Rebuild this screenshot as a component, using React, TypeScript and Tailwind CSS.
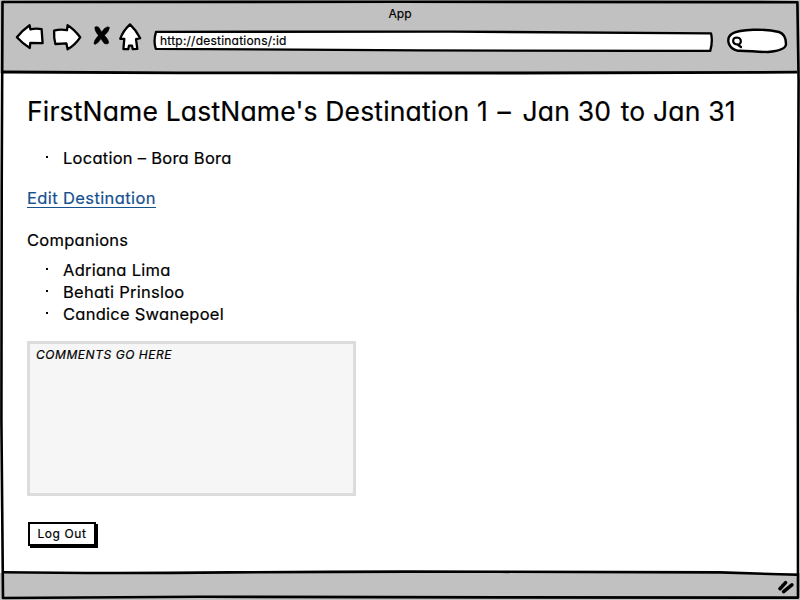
import type { ReactNode } from "react";

const companions = ["Adriana Lima", "Behati Prinsloo", "Candice Swanepoel"];

function BackIcon() {
  return (
    <svg className="h-[28px] w-[30px]" viewBox="15 23 30 28" fill="white" stroke="black" strokeWidth="2.3" strokeLinejoin="round">
      <path d="M16.9 37.3 Q22 30.5 29.6 25.2 L30.4 29.4 Q36 28 41.6 29.2 L42.6 43.2 L30.3 42.8 L29.8 48 Q23 44 16.9 37.3Z" />
    </svg>
  );
}

function ForwardIcon() {
  return (
    <svg className="h-[28px] w-[31px]" viewBox="52 23 31 28" fill="white" stroke="black" strokeWidth="2.3" strokeLinejoin="round">
      <path d="M54.1 30.6 Q60 29 67 30.2 L67.6 25.2 Q74 29 80.2 37.3 Q75 45 67.6 49.3 L66.4 43.4 L55.4 44 Q53.8 38 54.1 30.6Z" />
    </svg>
  );
}

function StopIcon() {
  return (
    <svg className="h-[22px] w-[18px]" viewBox="93 25 18 22" fill="black" stroke="black" strokeWidth="0.5" strokeLinejoin="round">
      <path d="M94.8 27.2 Q96.5 25.6 98.7 27.2 L101.7 32 Q104 27.8 107.5 26.7 L109.5 27.4 Q109.3 31 104.5 35.5 Q108.5 39 108.8 43 Q107 44.8 104.3 43.6 L100.8 38.8 Q99 42.8 95.2 44.5 L93.9 43.6 Q93.8 40.5 98.4 35.5 Q94.5 31 94.8 27.2Z" />
    </svg>
  );
}

function HomeIcon() {
  return (
    <svg className="h-[30px] w-[25px]" viewBox="118 22 25 30" fill="white" stroke="black" strokeWidth="2.3" strokeLinejoin="round">
      <path d="M130 24.4 Q136 30 140.2 38.2 L136 39.2 L137.3 48.8 L132.8 49.2 L132 45.7 L129 45.7 L128.2 49.2 L123.4 49 L124.3 38.8 L120.2 38.8 Q123 31 130 24.4Z" />
    </svg>
  );
}

function AddressBar() {
  return (
    <div className="relative flex h-[22px] w-[560px] items-center pl-[7px]">
      <svg className="absolute inset-0 h-[22px] w-[560px]" viewBox="153 30 560 22" fill="white" stroke="black" strokeWidth="2.3" strokeLinejoin="round">
        <path d="M156 31.8 L450 31.6 L711 33.4 Q713 41 710.2 51 L420 50.4 L155.8 48.8 Q153.2 41 156 31.8Z" />
      </svg>
      <span className="relative text-[12px] leading-4 tracking-[0.22px]">http://destinations/:id</span>
    </div>
  );
}

function SearchField() {
  return (
    <svg className="h-[27px] w-[62px]" viewBox="727 28 62 27" fill="white" stroke="black" strokeWidth="2.4" strokeLinecap="round">
      <path d="M738 50.8 C727 48 726 38 732 33.8 C740 29 765 28.5 779 32 C785 34 786 40 786 44 C786 49 779 51 768 52 C757 52 746 50.5 738 50.8Z" />
      <path d="M737 44.5 C731.8 44 732 37.5 737 37.5 C742.2 38 742 45 737 44.5Z M737.6 44.5 L741 47" strokeWidth="2.2" />
    </svg>
  );
}

function Bullet({ children }: { children: ReactNode }) {
  return (
    <li className="flex h-[22px] items-center">
      <span className="mr-[15px] ml-[19px] mb-[2px] h-[2px] w-[2px] bg-black" />
      {children}
    </li>
  );
}

function WindowOutline() {
  return (
    <svg className="pointer-events-none absolute inset-0 h-[600px] w-[800px]" viewBox="0 0 800 600" fill="none" stroke="black" strokeWidth="2.6" strokeLinejoin="round">
      <path d="M2.5 2 L400 1.8 L797.4 2.2 L798.6 80 L797.8 300 L798 597.6 L500 597.4 L200 596.8 L3 598 L1.4 420 L1.7 190 Z" />
      <path d="M3 72 L180 72.9 L520 73 L797 72.2" strokeWidth="2.8" />
      <path d="M3 572.2 Q100 573.6 230 572.4 T500 571.8 T720 572.4 L797 574.8" />
    </svg>
  );
}

export default function App() {
  return (
    <div className="relative flex h-[600px] w-[800px] flex-col overflow-hidden bg-white font-['Inter',sans-serif] text-black [font-feature-settings:'cv11'] [-webkit-text-stroke:0.2px]">
      <header className="h-[73px] bg-[#c1c1c1]">
        <div className="flex h-[22px] items-center justify-center pt-[5px] text-[12px] leading-4">App</div>
        <div className="flex h-[30px] items-start pl-[15px]">
          <div className="mt-px"><BackIcon /></div>
          <div className="mt-px ml-[7px]"><ForwardIcon /></div>
          <div className="mt-[3px] ml-[10px]"><StopIcon /></div>
          <div className="ml-[7px]"><HomeIcon /></div>
          <div className="mt-[8px] ml-[10px]"><AddressBar /></div>
          <div className="mt-[6px] ml-[14px]"><SearchField /></div>
        </div>
      </header>

      <main className="flex h-[500px] flex-col items-start pl-[27px] text-[16.5px] tracking-[0.26px]">
        <h1 className="mt-[20px] h-[36px] text-[26.5px] leading-[36px] tracking-[0.17px] whitespace-nowrap">
          FirstName LastName's Destination 1 <span className="mr-[4px] ml-[2px]">–</span> Jan 30 <span className="ml-[2px]">to</span> Jan 31
        </h1>
        <ul className="mt-[18px]">
          <Bullet>Location – Bora Bora</Bullet>
        </ul>
        <a className="mt-[19px] h-[20px] border-b border-[#15508f] leading-[20px] tracking-[0.39px] text-[#15508f]">Edit Destination</a>
        <h2 className="mt-[21px] h-[22px] leading-[22px]">Companions</h2>
        <ul className="mt-[8px]">
          {companions.map((name) => (
            <Bullet key={name}>{name}</Bullet>
          ))}
        </ul>
        <div className="mt-[16px] h-[155px] w-[329px] border-[3px] border-[#dcdcdc] bg-[#f6f6f6] px-[6px] pt-px text-[12px] leading-[20px] tracking-[0.55px] italic">
          COMMENTS GO HERE
        </div>
        <button className="mt-[26px] ml-px flex h-[24px] w-[68px] items-center justify-center border-2 border-black bg-white text-[12px] tracking-[0.6px] shadow-[2px_2px_0_black]">
          Log Out
        </button>
      </main>

      <footer className="flex h-[27px] items-center justify-end bg-[#c1c1c1] pr-[5px]">
        <svg className="h-[16px] w-[18px]" viewBox="777 579 18 16" stroke="black" strokeWidth="3.6" strokeLinecap="round">
          <path d="M780 588.7 L785.6 582.6 M783.6 591.6 L791.9 584.9" />
        </svg>
      </footer>
      <WindowOutline />
    </div>
  );
}
